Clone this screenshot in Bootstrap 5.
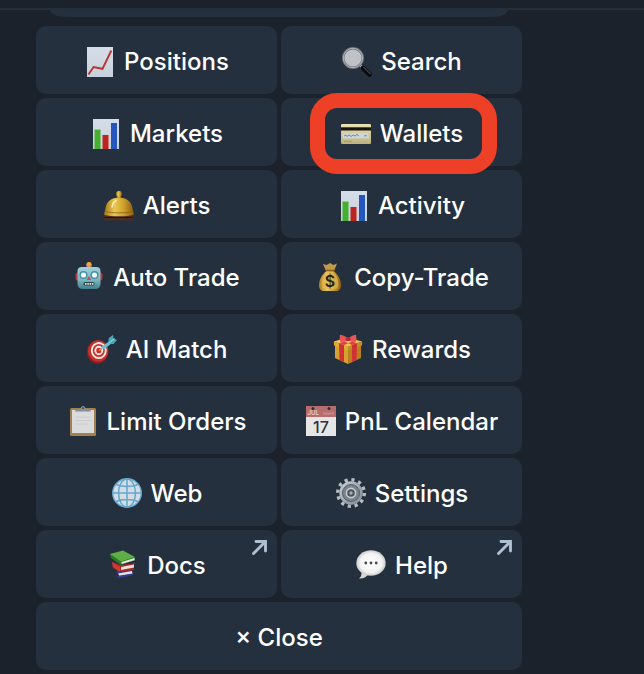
<!DOCTYPE html>
<html lang="en" data-bs-theme="dark">
<head>
<meta charset="utf-8">
<meta name="viewport" content="width=device-width, initial-scale=1">
<title>Bot menu</title>
<link href="https://cdn.jsdelivr.net/npm/bootstrap@5.3.0/dist/css/bootstrap.min.css" rel="stylesheet">
<style>
  body { background: #1b222c; font-family: Inter, "Liberation Sans", sans-serif; }
  .top-rule { height: 10px; border-bottom: 2px solid #23303c; }
  .menu-panel { max-width: 558px; padding: 0 36px 4px; }
  .bubble-end { height: 7px; margin: 0 14px 9px; background: #25303e; border-radius: 0 0 18px 18px / 0 0 8px 8px; }
  .key { --bs-btn-color: #fff; --bs-btn-bg: #25303e; --bs-btn-border-width: 0; --bs-btn-border-radius: 10px;
         --bs-btn-hover-color: #fff; --bs-btn-hover-bg: #2c3948; --bs-btn-active-bg: #303e4e; --bs-btn-active-color: #fff;
         --bs-btn-font-size: 24px; --bs-btn-font-weight: 550; --bs-btn-line-height: 32px;
         --bs-btn-padding-x: 4px; --bs-btn-padding-y: 0;
         min-height: 68px; padding-top: 3px; gap: 8px; white-space: nowrap; }
  .emoji { width: 32px; height: 32px; flex: none; }
  .ext { width: 15px; height: 15px; position: absolute; top: 10px; right: 10px; }
  .ring { position: absolute; inset: -5px 25px -8px 29px; border: 15px solid #ee4026; border-radius: 27px; pointer-events: none; z-index: 2; }
</style>
<script src="https://cdn.jsdelivr.net/npm/bootstrap@5.3.0/dist/js/bootstrap.bundle.min.js"></script>
</head>
<body>
<svg width="0" height="0" class="position-absolute" aria-hidden="true">
  <defs>
    <linearGradient id="paper" x2="0" y2="1"><stop stop-color="#d5dee8"/><stop offset="1" stop-color="#c6d0dc"/></linearGradient>
    <linearGradient id="gold" x2="1" y2="0"><stop stop-color="#a87a18"/><stop offset=".35" stop-color="#e8c955"/><stop offset=".65" stop-color="#d0a02b"/><stop offset="1" stop-color="#8a5f10"/></linearGradient>
    <linearGradient id="cardface" x2="0" y2="1"><stop stop-color="#e9e2b4"/><stop offset="1" stop-color="#bdb27c"/></linearGradient>
    <linearGradient id="robot" x2="0" y2="1"><stop stop-color="#9fd3dc"/><stop offset=".6" stop-color="#7cb4bf"/><stop offset="1" stop-color="#417f8c"/></linearGradient>
    <radialGradient id="white"><stop stop-color="#fff"/><stop offset=".75" stop-color="#f2f2f2"/><stop offset="1" stop-color="#c9c9c9"/></radialGradient>
    <linearGradient id="steel" x2="1" y2="1"><stop stop-color="#c9ced4"/><stop offset="1" stop-color="#7e868f"/></linearGradient>
  </defs>
  <symbol id="bars" viewBox="-1 -1 32 32">
    <path fill="url(#paper)" d="M2 0h26v30H2z"/>
    <path fill="#45b02f" d="M3.500 10.500h6V30h-6z"/><path fill="#bd2420" d="M11.500 16h6v14h-6z"/><path fill="#2556bb" d="M20 4h6v26h-6z"/>
  </symbol>
  <symbol id="arrow" viewBox="0 0 15 15">
    <path d="M1.500 13.500 13 2M4 1.500h9.500V11" fill="none" stroke="#afbfd2" stroke-width="2.900" stroke-linecap="round"/>
  </symbol>
</svg>

<div class="top-rule"></div>
<main class="menu-panel">
  <div class="bubble-end"></div>
  <div class="row g-1">
    <div class="col-6"><button type="button" class="btn key w-100 d-flex align-items-center justify-content-center">
      <svg class="emoji" viewBox="-1 -1 32 32" aria-hidden="true"><path fill="url(#paper)" d="M2 0h26v30H2z"/><path d="m3.500 27.500 5-7.500 9 1.800L26.300 3.500" fill="none" stroke="#b93531" stroke-width="1.900"/></svg>
      Positions</button></div>
    <div class="col-6"><button type="button" class="btn key w-100 d-flex align-items-center justify-content-center">
      <svg class="emoji" viewBox="-1 -1 32 32" aria-hidden="true"><path d="m18 18 4 4" stroke="#9aa0a6" stroke-width="2.500"/><path d="m21 21 6.500 6.500" stroke="#0b0c0e" stroke-width="4.600" stroke-linecap="round"/><path d="m21.500 20 7 7" stroke="#64696e" stroke-width="1"/><circle cx="11" cy="11" r="9.800" fill="#c0c1c6" stroke="#6d7277" stroke-width="2.400"/><circle cx="11" cy="11" r="9.700" fill="none" stroke="#b6bdc3" stroke-width=".9"/></svg>
      Search</button></div>
    <div class="col-6"><button type="button" class="btn key w-100 d-flex align-items-center justify-content-center">
      <svg class="emoji" aria-hidden="true"><use href="#bars"/></svg>
      Markets</button></div>
    <div class="col-6"><button type="button" class="btn key w-100 d-flex align-items-center justify-content-center position-relative z-1">
      <svg class="emoji" viewBox="-1 -1 32 32" aria-hidden="true"><rect y="5" width="30" height="20" rx="1.200" fill="url(#cardface)"/><path fill="#15130f" d="M0 8.300h30v3.200H0z"/><path fill="#cfd6da" d="M1.700 14.200h26v5.200h-26z"/><path d="m3 17 2-1 1 1.500 2-1.500 2 1.500 2-1.500 2 1 2-1.500 2 1.500M23 16.800h3" fill="none" stroke="#6f86b4" stroke-width="1"/><path d="M3 22.300h8" stroke="#a49a68" stroke-width="1"/></svg>
      Wallets<span class="ring"></span></button></div>
    <div class="col-6"><button type="button" class="btn key w-100 d-flex align-items-center justify-content-center">
      <svg class="emoji" viewBox="-1 -1 32 32" aria-hidden="true"><path fill="#4a2c20" d="M1 23h28l1 5q0 1.500-2 1.500H2Q0 29.500 0 28z"/><path d="M.5 26.500h29" stroke="#241612" stroke-width="1"/><path fill="#b98a2a" d="M13.500 4.500h3v4h-3z"/><circle cx="15" cy="3" r="2.900" fill="url(#gold)"/><path fill="url(#gold)" d="M.3 24C.3 21 1 20 1.500 17.500 2.500 10 8 6.500 15 6.500S27.500 10 28.500 17.500c.5 2.500 1.200 3.500 1.200 6.500-6 1.700-23.400 1.700-29.400 0z"/><path d="M1.500 20.500c7 1.800 20 1.800 27 0" fill="none" stroke="#8b6113" stroke-width=".8"/><path d="M8 16c.5-3.500 2-5.500 4-6.500" fill="none" stroke="#fff3b0" stroke-width="1.500" stroke-linecap="round"/></svg>
      Alerts</button></div>
    <div class="col-6"><button type="button" class="btn key w-100 d-flex align-items-center justify-content-center">
      <svg class="emoji" aria-hidden="true"><use href="#bars"/></svg>
      Activity</button></div>
    <div class="col-6"><button type="button" class="btn key w-100 d-flex align-items-center justify-content-center">
      <svg class="emoji" viewBox="-1 0 32 32" aria-hidden="true"><rect x="1.500" y="10.500" width="27" height="8" rx="2.500" fill="#b8383d"/><rect x="12" y="2" width="6" height="4" fill="#6b4f9b"/><circle cx="15" cy="2.400" r="2.500" fill="#f0a63a"/><path fill="url(#robot)" d="M3.500 9q0-4 4.500-4h14q4.500 0 4.500 4v13q0 5-5.500 5H9q-5.500 0-5.500-5z"/><circle cx="9.500" cy="13" r="4" fill="#3f8fa5"/><circle cx="20.500" cy="13" r="4" fill="#3f8fa5"/><circle cx="9.500" cy="13" r="2.600" fill="#f4ffff"/><circle cx="20.500" cy="13" r="2.600" fill="#f4ffff"/><path fill="#d8443e" d="m15 14 2.200 4h-4.400z"/><rect x="9.500" y="20" width="11" height="3.600" rx="1.500" fill="#24464f"/><path d="M11 21.800h8.500" stroke="#f2ece0" stroke-width="1.800" stroke-dasharray="1.500 .8"/></svg>
      Auto Trade</button></div>
    <div class="col-6"><button type="button" class="btn key w-100 d-flex align-items-center justify-content-center">
      <svg class="emoji" viewBox="-1 0 32 32" aria-hidden="true"><path fill="#c39a45" d="m8 2 3.500 1L15 1l3.500 2L22 1.500 19 9h-8z"/><path fill="url(#gold)" d="M11.500 9h7c5 4 7.500 9 7.500 14 0 4-2 6-5 6H9c-3 0-5-2-5-6 0-5 2.500-10 7.500-14z"/><path fill="#e4be62" fill-opacity=".6" d="M12 10h6c4 4 5.500 8 5.500 12 0 3-1.500 5-4 5h-9c-2.500 0-4-2-4-5 0-4 1.500-8 5.500-12z"/><path d="M11 8.500h8.500" stroke="#8b5f20" stroke-width="1.600"/><text x="15" y="25" text-anchor="middle" font-family="Inter, sans-serif" font-size="16" font-weight="600" fill="#2a2113">$</text></svg>
      Copy-Trade</button></div>
    <div class="col-6"><button type="button" class="btn key w-100 d-flex align-items-center justify-content-center">
      <svg class="emoji" viewBox="-1 0 32 32" aria-hidden="true"><ellipse cx="10.500" cy="18" rx="10.500" ry="11.500" fill="#8e201f"/><ellipse cx="11.300" cy="17" rx="10.200" ry="10.700" fill="#c92f2c"/><g fill="none" stroke="#f3e8e4" stroke-width="1.900"><ellipse cx="11.800" cy="16.500" rx="7" ry="7.500"/><ellipse cx="11.800" cy="16.500" rx="3.500" ry="3.800"/></g><path d="m12 16.500 6-4.500" stroke="#d99a37" stroke-width="1.500"/><path d="m16.500 13.500 6-4.500" stroke="#65c4d1" stroke-width="3.400" stroke-linecap="round"/><path fill="#4aa9b8" d="m21 10 .8-6L26 1l.5 3.500L30 6l-3.500 4z"/><path d="m21.500 9.500 6-5" stroke="#b1e7ec" stroke-width=".9"/></svg>
      AI Match</button></div>
    <div class="col-6"><button type="button" class="btn key w-100 d-flex align-items-center justify-content-center">
      <svg class="emoji" viewBox="-1 0 32 32" aria-hidden="true"><path fill="#d9a02d" d="m2 10 13 5v15L2 24z"/><path fill="#b9801c" d="m28 10-13 5v15l13-6z"/><path fill="#f1c454" d="M.8 7.500 14 3.500l15 4-14 5.500z"/><path fill="#e0aa35" d="m.8 7.500 14.200 5v4L1 11.500z"/><path fill="#c58e22" d="m29.200 7.500-14.200 5v4l14-5z"/><path fill="#cf3236" d="m6 9.300 5 1.800v17L6.500 26zM24 9.300l-5 1.800v17l4.500-2.100z"/><path fill="#dc4447" d="m6 9.300 13-5 4.500 1.300L11 11.100zM24 9.300l-13-5L8 5.500 19 11z"/><path fill="#e95458" d="M14.500 4Q8 0 7 1q-1 4 .5 7Q10 8.500 14.500 6zM15.500 4Q22 0 23 1q1 4-.5 7-2.500.5-7-2z"/><rect x="12.800" y="3" width="4.600" height="4" rx="1.500" fill="#b9262c"/></svg>
      Rewards</button></div>
    <div class="col-6"><button type="button" class="btn key w-100 d-flex align-items-center justify-content-center">
      <svg class="emoji" viewBox="-1 0 32 32" aria-hidden="true"><rect x="2" y="2" width="26" height="28" rx="1.500" fill="#a4804f"/><path fill="#dadbdc" d="M4 4h22v23H4z"/><path d="M7.500 11h14M7.500 14.500h15M7.500 18h12" stroke="#cbccce" stroke-width="1"/><path fill="#85909d" d="M7 5.500q0-2.500 4.500-2.500h1q.5-3 2.500-3t2.500 3h1Q23 3 23 5.500z"/><circle cx="15" cy="2.200" r=".9" fill="#394550"/></svg>
      Limit Orders</button></div>
    <div class="col-6"><button type="button" class="btn key w-100 d-flex align-items-center justify-content-center">
      <svg class="emoji" viewBox="-1 0 32 32" aria-hidden="true"><path fill="#e6e6e7" d="M0 0h30v30H0z"/><path fill="#b66e6d" d="M0 0h30v11H0z"/><circle cx="7" cy="2.400" r="1.500" fill="#26303e"/><circle cx="23" cy="2.400" r="1.500" fill="#26303e"/><text x="1.500" y="9" font-family="Inter, sans-serif" font-size="6" font-weight="600" fill="#e7cfcf">JUL</text><path d="M17 7.500h11" stroke="#c58b89" stroke-width="2"/><text x="15" y="27" text-anchor="middle" font-family="Inter, sans-serif" font-size="16" font-weight="500" fill="#303238">17</text></svg>
      PnL Calendar</button></div>
    <div class="col-6"><button type="button" class="btn key w-100 d-flex align-items-center justify-content-center">
      <svg class="emoji" viewBox="-1 0 32 32" aria-hidden="true"><circle cx="15" cy="15" r="14.300" fill="#d5dce4" stroke="#66a9cf" stroke-width="1.400"/><g fill="none" stroke="#62a7cf" stroke-width="1.500"><path d="M15 1v28M1 15h28M4 6.500c6 2.600 16 2.600 22 0M4 23.500c6-2.600 16-2.600 22 0"/><ellipse cx="15" cy="15" rx="8.500" ry="14"/></g></svg>
      Web</button></div>
    <div class="col-6"><button type="button" class="btn key w-100 d-flex align-items-center justify-content-center">
      <svg class="emoji" viewBox="-1 0 32 32" aria-hidden="true"><circle cx="15" cy="15" r="13.300" fill="none" stroke="#b7bdc5" stroke-width="3.400" stroke-dasharray="3.200 3.764"/><circle cx="15" cy="15" r="11.700" fill="url(#steel)"/><circle cx="15" cy="15" r="8.500" fill="#7b838c" stroke="#565e67"/><circle cx="15" cy="15" r="4.600" fill="#4b535d" stroke="#c6cbd1" stroke-width="1.600"/><circle cx="15" cy="15" r="1.700" fill="#a8b0b8"/></svg>
      Settings</button></div>
    <div class="col-6"><a href="#docs" class="btn key w-100 d-flex align-items-center justify-content-center position-relative">
      <svg class="emoji" viewBox="-1 0 32 32" aria-hidden="true"><path fill="#353c91" d="m8 21 15-2 2 5.500-13 2.500z"/><path fill="#e6e3dc" d="m10 23.500 14-2.500.5 3-13 2z"/><path fill="#353c91" d="m9 26 15.500-2.500.5 1.500-14 3z"/><path fill="#a92725" d="m4 12 9 3 14-2-1 2-.5 5-13.500 2-7-4z"/><path fill="#cf3a34" d="m4 12 8 5v5l-7-5z"/><path fill="#e9e2dc" d="m13 17 13-2.500v3L13 20z"/><path fill="#2d7a24" d="m2 4 11 7 14-4v3l-14 5L3 8z"/><path fill="#5eae48" d="M2 4 15 .5 27 7l-14 4.500z"/><path fill="#e3eadf" d="m13.500 12 13-4v2.200l-13 3.800z"/></svg>
      Docs<svg class="ext" aria-hidden="true"><use href="#arrow"/></svg></a></div>
    <div class="col-6"><a href="#help" class="btn key w-100 d-flex align-items-center justify-content-center position-relative">
      <svg class="emoji" viewBox="-1 0 32 32" aria-hidden="true"><path fill="#d5d5d5" d="M5 20c1 4 .5 6.500-2 8.500 4 .5 8-1.500 10-5z"/><ellipse cx="15" cy="13" rx="14.700" ry="12.800" fill="url(#white)"/><g fill="#44474b"><circle cx="9.800" cy="13" r="1.400"/><circle cx="15" cy="13" r="1.400"/><circle cx="20.200" cy="13" r="1.400"/></g></svg>
      Help<svg class="ext" aria-hidden="true"><use href="#arrow"/></svg></a></div>
    <div class="col-12"><button type="button" class="btn key w-100 d-flex align-items-center justify-content-center">× Close</button></div>
  </div>
</main>
</body>
</html>
